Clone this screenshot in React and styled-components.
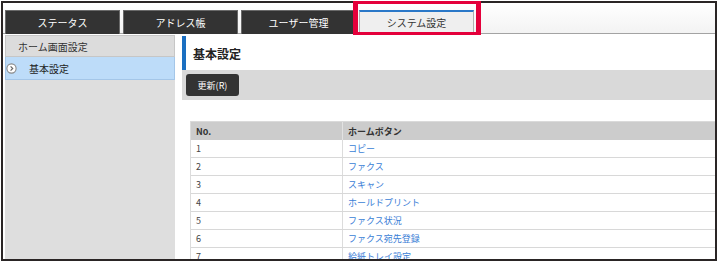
import React from "react";
import styled, { createGlobalStyle } from "styled-components";

const GlobalStyle = createGlobalStyle`
  html, body {
    margin: 0;
    padding: 0;
    background: #fff;
  }
  body {
    font-family: "Noto Sans CJK JP", "Noto Sans", sans-serif;
    color: #333;
  }
`;

const tabs = ["ステータス", "アドレス帳", "ユーザー管理", "システム設定"];

const rows = [
  [1, "コピー"],
  [2, "ファクス"],
  [3, "スキャン"],
  [4, "ホールドプリント"],
  [5, "ファクス状況"],
  [6, "ファクス宛先登録"],
  [7, "給紙トレイ設定"],
];

const ArrowIcon = () => (
  <svg width="11" height="11" viewBox="0 0 11 11">
    <circle cx="5.5" cy="5.5" r="4.6" fill="#fff" stroke="#8a8a8a" strokeWidth="1.1" />
    <path d="M4.6 3.4 L6.7 5.5 L4.6 7.6" fill="none" stroke="#666" strokeWidth="1.2" />
  </svg>
);

const App = () => {
  return (
    <>
      <GlobalStyle />
      <Frame>
        <Inner>
          <TabBar>
            {tabs.map((t, i) => (
              <Tab key={t} active={i === 3}>
                {t}
              </Tab>
            ))}
          </TabBar>
          <Main>
            <Sidebar>
              <SideHeader>ホーム画面設定</SideHeader>
              <SideItem>
                <ArrowIcon />
                <span>基本設定</span>
              </SideItem>
            </Sidebar>
            <Content>
              <Title>基本設定</Title>
              <Toolbar>
                <Button>更新(R)</Button>
              </Toolbar>
              <Table>
                <HeadRow>
                  <HeadCell first>No.</HeadCell>
                  <HeadCell>ホームボタン</HeadCell>
                </HeadRow>
                {rows.map(([n, label]) => (
                  <Row key={n}>
                    <Cell first>{n}</Cell>
                    <Cell>
                      <LinkText>{label}</LinkText>
                    </Cell>
                  </Row>
                ))}
              </Table>
            </Content>
          </Main>
        </Inner>
        <Highlight />
      </Frame>
    </>
  );
};
export default App;

const Frame = styled.div`
  position: relative;
  box-sizing: border-box;
  margin: 1px;
  width: 716px;
  height: 260px;
  border: 2px solid #2a2525;
`;

const Inner = styled.div`
  width: 100%;
  height: 100%;
  overflow: hidden;
  display: flex;
  flex-direction: column;
  background: #fff;
`;

const Highlight = styled.div`
  position: absolute;
  left: 350px;
  top: -2px;
  width: 128px;
  height: 34px;
  box-sizing: border-box;
  border-style: solid;
  border-color: #e4003b;
  border-width: 3px 5px 3px 5px;
`;

const TabBar = styled.div`
  display: flex;
  gap: 3px;
  height: 31px;
  padding: 7px 0 0 2px;
  box-sizing: border-box;
  border-bottom: 1px solid #a3a3a3;
  background: linear-gradient(#ffffff, #f3f3f3);
  flex-shrink: 0;
`;

const Tab = styled.div`
  width: 115px;
  height: ${(p) => (p.active ? "23px" : "24px")};
  box-sizing: border-box;
  display: flex;
  align-items: center;
  justify-content: center;
  font-size: 10px;
  background: ${(p) => (p.active ? "#efefef" : "#333333")};
  color: ${(p) => (p.active ? "#333" : "#fff")};
  border: 1px solid ${(p) => (p.active ? "#b0b0b0" : "#6a6a6a")};
  border-top: ${(p) => (p.active ? "2px solid #2a78c8" : "1px solid #6a6a6a")};
  border-bottom: none;
`;

const Main = styled.div`
  flex: 1;
  display: flex;
  gap: 7px;
  min-height: 0;
`;

const Sidebar = styled.div`
  width: 170px;
  margin: 1px 0 0 2px;
  background: #dedede;
  flex-shrink: 0;
`;

const SideHeader = styled.div`
  height: 22px;
  box-sizing: border-box;
  padding-left: 12px;
  display: flex;
  align-items: center;
  font-size: 10px;
  color: #333;
  background: #dcdcdc;
  border: 1px solid #c6c6c6;
`;

const SideItem = styled.div`
  height: 23px;
  box-sizing: border-box;
  display: flex;
  align-items: center;
  gap: 12px;
  padding-left: 0;
  font-size: 10px;
  color: #222;
  background: #bddcf9;
  border: 1px solid #a4c6e8;
  border-top: none;
`;

const Content = styled.div`
  flex: 1;
  display: flex;
  flex-direction: column;
  padding-top: 2px;
  min-width: 0;
`;

const Title = styled.div`
  height: 34px;
  box-sizing: border-box;
  border-left: 4px solid #1b6fc1;
  padding-left: 7px;
  display: flex;
  align-items: center;
  font-size: 12px;
  font-weight: bold;
  color: #222;
  flex-shrink: 0;
`;

const Toolbar = styled.div`
  height: 30px;
  box-sizing: border-box;
  padding: 4px;
  background: #d9d9d9;
  flex-shrink: 0;
`;

const Button = styled.div`
  width: 53px;
  height: 22px;
  display: flex;
  align-items: center;
  justify-content: center;
  background: #333;
  color: #fff;
  font-size: 9px;
  border-radius: 3px;
`;

const Table = styled.div`
  margin: 21px 0 0 8px;
  border-left: 1px solid #dcdcdc;
  font-size: 9px;
`;

const HeadRow = styled.div`
  display: flex;
  height: 19px;
  box-sizing: border-box;
  border-top: 1px solid #dadada;
  background: #cccccc;
`;

const HeadCell = styled.div`
  display: flex;
  align-items: center;
  padding-left: 5px;
  box-sizing: border-box;
  font-weight: bold;
  color: #333;
  ${(p) => (p.first ? "width: 152px; border-right: 1px solid #e2e2e2;" : "flex: 1;")}
`;

const Row = styled.div`
  display: flex;
  height: 18px;
  box-sizing: border-box;
  border-bottom: 1px solid #d8d8d8;
  background: #fff;
`;

const Cell = styled.div`
  display: flex;
  align-items: center;
  padding-left: 5px;
  box-sizing: border-box;
  color: #444;
  ${(p) => (p.first ? "width: 152px; border-right: 1px solid #dcdcdc;" : "flex: 1;")}
`;

const LinkText = styled.span`
  color: #3a7ed6;
`;
